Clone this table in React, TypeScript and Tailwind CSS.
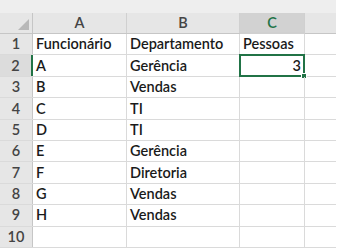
const cols = [
  { key: "A", w: "w-[94px]" },
  { key: "B", w: "w-[113px]" },
  { key: "C", w: "w-[65px]" },
  { key: "D", w: "w-[31px]" },
];

const rows: string[][] = [
  ["Funcionário", "Departamento", "Pessoas"],
  ["A", "Gerência", "3"],
  ["B", "Vendas", ""],
  ["C", "TI", ""],
  ["D", "TI", ""],
  ["E", "Gerência", ""],
  ["F", "Diretoria", ""],
  ["G", "Vendas", ""],
  ["H", "Vendas", ""],
  ["", "", ""],
];

export default function App() {
  return (
    <div
      className="w-[350px] h-[249px] overflow-hidden bg-white text-[14.5px] font-semibold text-[#1a1a1a]"
      style={{ fontFamily: "Lato, 'Open Sans', sans-serif" }}
    >
      <div className="w-[336px] h-[13px] bg-[#eeeeee]" />
      {/* column headers */}
      <div className="flex h-[21px] w-[336px] bg-[#e6e6e6] border-b border-[#c6c6c6]">
        <div className="w-[33px] shrink-0 relative border-r border-[#c6c6c6]">
          <div className="absolute right-[3px] bottom-[3px] w-0 h-0 border-l-[11px] border-l-transparent border-b-[11px] border-b-[#b8b8b8]" />
        </div>
        {cols.map((c) => (
          <div
            key={c.key}
            className={`${c.w} shrink-0 flex items-center justify-center ${
              c.key === "C"
                ? "bg-[#d2d2d2] text-[#217346] border-b-2 border-[#217346] -mb-px"
                : "text-[#444]"
            } ${c.key === "D" ? "" : "border-r border-[#d0d0d0]"}`}
          >
            {c.key === "D" ? "" : c.key}
          </div>
        ))}
      </div>
      {rows.map((r, i) => (
        <div key={i} className="flex h-[21.4px] w-[336px] border-b border-[#dadada]">
          <div
            className={`w-[33px] shrink-0 flex items-center justify-center text-[#444] border-r ${
              i === 1 ? "bg-[#dcdcdc] border-r-2 border-r-[#217346]" : "bg-[#e6e6e6] border-[#c6c6c6]"
            }`}
          >
            {i + 1}
          </div>
          <div className="w-[94px] shrink-0 flex items-center pl-[3px] border-r border-[#dadada]">
            {r[0]}
          </div>
          <div className="w-[113px] shrink-0 flex items-center pl-[3px] border-r border-[#dadada]">
            {r[1]}
          </div>
          <div
            className={`w-[65px] shrink-0 flex items-center border-r border-[#dadada] relative ${
              i === 1 ? "justify-end pr-[3px]" : "pl-[3px]"
            }`}
          >
            {i === 1 && (
              <div className="absolute -left-px -top-px right-[-1px] bottom-[-1px] border-2 border-[#217346]">
                <div className="absolute right-[-4px] bottom-[-4px] w-[6px] h-[6px] bg-[#217346] border border-white" />
              </div>
            )}
            <span className="relative">{r[2]}</span>
          </div>
          <div className="w-[31px] shrink-0" />
        </div>
      ))}
    </div>
  );
}
